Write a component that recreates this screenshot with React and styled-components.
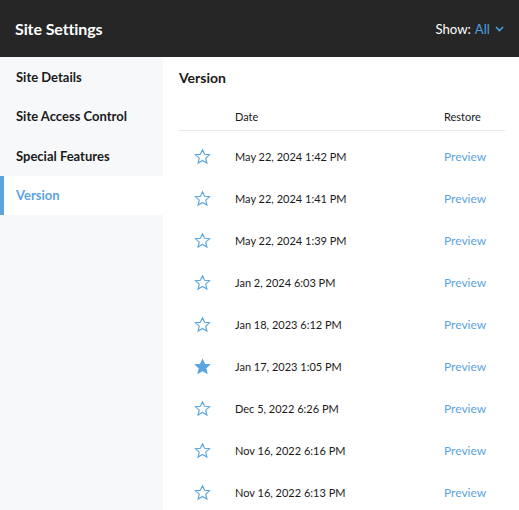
import React from 'react'
import styled, { createGlobalStyle } from 'styled-components';

const GlobalStyle = createGlobalStyle`
  html, body {
    margin: 0;
    padding: 0;
    background: #fff;
    font-family: Lato, "Open Sans", sans-serif;
  }
`;

const Page = styled.div`
  width: 519px;
  height: 510px;
  display: flex;
  flex-direction: column;
  overflow: hidden;
`;

const TopBar = styled.div`
  height: 57px;
  flex: none;
  background: #262626;
  display: flex;
  align-items: center;
  justify-content: space-between;
  padding: 0 15px 0 15px;
  color: #fff;
`;

const Title = styled.div`
  font-size: 16px;
  font-weight: 700;
  letter-spacing: -0.1px;
`;

const Show = styled.div`
  display: flex;
  align-items: center;
  font-size: 13.2px;
  font-weight: 400;
  gap: 4px;
`;

const ShowValue = styled.span`
  color: #4a9fe0;
  display: flex;
  align-items: center;
  gap: 5px;
`;

const Body = styled.div`
  flex: 1;
  display: flex;
`;

const Sidebar = styled.div`
  width: 163px;
  flex: none;
  background: #f7f8fa;
`;

const NavItem = styled.div`
  height: 39.5px;
  display: flex;
  align-items: center;
  padding-left: 16px;
  font-size: 13px;
  font-weight: 700;
  color: ${props => props.active ? '#5aa5e0' : '#1a1a1a'};
  background: ${props => props.active ? '#fff' : 'transparent'};
  box-shadow: ${props => props.active ? 'inset 4px 0 0 #5aa5e0' : 'none'};
`;

const Content = styled.div`
  flex: 1;
  padding: 0 14px 0 16px;
`;

const Heading = styled.div`
  font-size: 14px;
  font-weight: 700;
  color: #1a1a1a;
  height: 42px;
  display: flex;
  align-items: center;
  margin-top: -1px;
`;

const List = styled.div`
  padding-top: 4px;
`;

const Row = styled.div`
  display: grid;
  grid-template-columns: 56px 1fr 61px;
  align-items: center;
  height: ${props => props.header ? '32px' : '42px'};
  border-bottom: ${props => props.header ? '1px solid #e8e8e8' : 'none'};
  font-size: 11px;
  color: #1a1a1a;
`;

const StarCell = styled.div`
  display: flex;
  justify-content: flex-start;
  padding-left: 15px;
  margin-top: 1px;
`;

const HeadCell = styled.div`
  font-size: 11px;
  padding-top: 4px;
`;

const Preview = styled.a`
  color: #5aa5e0;
  font-size: 12px;
  text-decoration: none;
`;

const Star = ({ filled }) => (
  <svg width="17" height="17" viewBox="0 0 24 24">
    <path
      d="M12 2.5l2.9 6.4 7 .7-5.3 4.7 1.6 6.9L12 17.6l-6.2 3.6 1.6-6.9L2.1 9.6l7-.7z"
      fill={filled ? '#5aa5e0' : 'none'}
      stroke="#5aa5e0"
      strokeWidth="1.6"
      strokeLinejoin="miter"
    />
  </svg>
);

const Chevron = () => (
  <svg width="9" height="6" viewBox="0 0 9 6">
    <path d="M1 1l3.5 3.5L8 1" fill="none" stroke="#4a9fe0" strokeWidth="1.6" />
  </svg>
);

const versions = [
  { date: 'May 22, 2024 1:42 PM' },
  { date: 'May 22, 2024 1:41 PM' },
  { date: 'May 22, 2024 1:39 PM' },
  { date: 'Jan 2, 2024 6:03 PM' },
  { date: 'Jan 18, 2023 6:12 PM' },
  { date: 'Jan 17, 2023 1:05 PM', starred: true },
  { date: 'Dec 5, 2022 6:26 PM' },
  { date: 'Nov 16, 2022 6:16 PM' },
  { date: 'Nov 16, 2022 6:13 PM' },
];

const nav = ['Site Details', 'Site Access Control', 'Special Features', 'Version'];

export default function App() {
  return (
    <Page>
      <GlobalStyle />
      <TopBar>
        <Title>Site Settings</Title>
        <Show>
          Show: <ShowValue>All <Chevron /></ShowValue>
        </Show>
      </TopBar>
      <Body>
        <Sidebar>
          {nav.map(n => (
            <NavItem key={n} active={n === 'Version'}>{n}</NavItem>
          ))}
        </Sidebar>
        <Content>
          <Heading>Version</Heading>
          <Row header>
            <div />
            <HeadCell>Date</HeadCell>
            <HeadCell>Restore</HeadCell>
          </Row>
          <List>
            {versions.map((v, i) => (
              <Row key={i}>
                <StarCell><Star filled={v.starred} /></StarCell>
                <div>{v.date}</div>
                <Preview href="#">Preview</Preview>
              </Row>
            ))}
          </List>
        </Content>
      </Body>
    </Page>
  );
}
